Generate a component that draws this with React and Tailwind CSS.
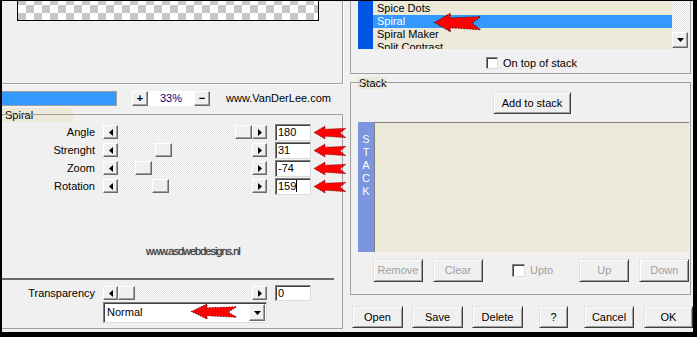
const raised =
  "bg-[#f0f0f0] border border-t-white border-l-white border-r-[#696969] border-b-[#696969] shadow-[inset_-1px_-1px_0_#a0a0a0]";
const push =
  "bg-[#f0f0f0] border border-t-[#e3e3e3] border-l-[#e3e3e3] border-r-[#404040] border-b-[#404040] shadow-[inset_1px_1px_0_#fff,inset_-1px_-1px_0_#a0a0a0] flex items-center justify-center";
const sunken =
  "bg-white border border-t-[#808080] border-l-[#808080] border-r-[#dcdcdc] border-b-[#dcdcdc] shadow-[inset_1px_1px_0_#404040]";
const beige = "bg-[#ece9d8]";
const dots =
  "bg-[image:repeating-conic-gradient(#e4e4e4_0_25%,#fbfbfb_0_50%)] bg-[length:2px_2px]";

function Tri({ dir }) {
  if (dir === "down")
    return (
      <svg width="7" height="4" viewBox="0 0 7 4">
        <polygon points="0,0 7,0 3.5,4" fill="#000" />
      </svg>
    );
  return (
    <svg width="4" height="7" viewBox="0 0 4 7">
      <polygon points={dir === "left" ? "4,0 4,7 0,3.5" : "0,0 0,7 4,3.5"} fill="#000" />
    </svg>
  );
}

function RedArrow({ className }) {
  return (
    <svg className={className} viewBox="0 0 34 16" preserveAspectRatio="none">
      <polygon
        points="1,8 12,1 12,4.5 33,3.5 27,8.5 33,13.5 12,12 12,15"
        fill="#ff0000"
        stroke="#5a1010"
        strokeWidth="0.8"
        strokeDasharray="1 1"
      />
    </svg>
  );
}

function Slider({ thumb }) {
  return (
    <div className="flex shrink-0 h-[14px] w-[164px] ml-[8px]">
      <div className={`${raised} w-[15px] h-full flex items-center justify-center`}>
        <Tri dir="left" />
      </div>
      <div className={`flex-1 h-full ${dots} flex`}>
        <div className={`${raised} w-[17px] h-full`} style={{ marginLeft: thumb }} />
      </div>
      <div className={`${raised} w-[15px] h-full flex items-center justify-center`}>
        <Tri dir="right" />
      </div>
    </div>
  );
}

function Row({ label, thumb, value, caret }) {
  return (
    <div className="flex items-center h-[18px]">
      <div className="w-[93px] shrink-0 text-right">{label}</div>
      <Slider thumb={thumb} />
      <div className={`${sunken} shrink-0 ml-[8px] w-[36px] h-[17px] pl-[2px] flex items-center leading-none`}>
        {value}
        {caret && <span className="w-px h-[12px] bg-black" />}
      </div>
      <RedArrow className="ml-[2px] w-[34px] h-[15px] shrink-0" />
    </div>
  );
}

export default function App() {
  const effects = ["Spice Dots", "Spiral", "Spiral Maker", "Split Contrast"];

  return (
    <div
      className="w-[697px] h-[337px] bg-black pt-px pl-[2px] pr-[4px] pb-[5px] flex text-[11px] text-black"
      style={{ fontFamily: '"Liberation Sans", Arial, sans-serif' }}
    >
      <div className="flex-1 flex bg-[#f0f0f0] overflow-hidden">
        {/* LEFT */}
        <div className="w-[344px] shrink-0 flex flex-col">
          <div className="w-[341px] h-[83px] border-r border-b border-[#a0a0a0] shadow-[1px_1px_0_#fff]">
            <div className="ml-[15px] w-[302px] h-[20px] border-x border-b border-black bg-[image:repeating-conic-gradient(#c6c6c6_0_25%,#ffffff_0_50%)] bg-[length:16px_16px] bg-[position:0_4px]" />
          </div>

          <div className="h-[24px] flex items-start pt-[7px]">
            <div className="w-[115px] h-[15px] border border-l-0 border-[#a0a0a0] bg-[#3399ff]" />
            <div className={`${raised} ml-[15px] w-[16px] h-[15px] flex items-center justify-center font-bold leading-none`}>
              +
            </div>
            <div className="w-[46px] h-[15px] bg-white text-[#000080] flex items-center justify-center">
              33%
            </div>
            <div className={`${raised} w-[16px] h-[15px] flex items-center justify-center font-bold leading-none`}>
              −
            </div>
            <div className="ml-[16px] leading-[15px]">www.VanDerLee.com</div>
          </div>

          <div className={`${beige} w-[71px] h-[14px] leading-[14px]`}>
            <span className={`${beige} pl-[3px] pr-[1px]`}>Spiral</span>
          </div>
          <div className="-mt-[8px] w-[341px] h-[215px] border-t border-r border-b border-[#a0a0a0] pt-[8px] flex flex-col">
            <Row label="Angle" thumb={117} value="180" />
            <Row label="Strenght" thumb={37} value="31" />
            <Row label="Zoom" thumb={17} value="-74" />
            <Row label="Rotation" thumb={34} value="159" caret />

            <div className="mt-[50px] pl-[144px] leading-[13px] text-[#3a3a3a] tracking-[-1px] [text-shadow:0_0_1px_#777]">
              www.asdwebdesigns.nl
            </div>

            <div className="mt-[20px] w-[332px] h-[2px] bg-[#6a6a6a]" />

            <div className="mt-[5px] flex items-center h-[16px]">
              <div className="w-[93px] shrink-0 text-right">Transparency</div>
              <Slider thumb={0} />
              <div className={`${sunken} shrink-0 ml-[8px] w-[36px] h-[16px] pl-[2px] flex items-center leading-none`}>
                0
              </div>
            </div>

            <div className={`${sunken} relative mt-[1px] ml-[101px] w-[164px] h-[21px] flex items-center pl-[3px]`}>
              <span className="flex-1">Normal</span>
              <div className={`${raised} mr-[1px] w-[16px] h-[17px] flex items-center justify-center`}>
                <Tri dir="down" />
              </div>
              <RedArrow className="absolute left-[86px] top-[0px] w-[48px] h-[17px]" />
            </div>
          </div>
        </div>

        {/* RIGHT */}
        <div className="flex-1 flex flex-col">
          <div className="ml-[4px] w-[341px] h-[73px] border-x border-b border-[#a0a0a0] pl-[7px]">
            <div className="flex h-[48px]">
              <div className="w-[15px] h-full bg-[#0055e5]" />
              <div className={`relative w-[299px] h-full ${beige} overflow-hidden pt-[1px]`}>
                {effects.map((e) => (
                  <div
                    key={e}
                    className={`h-[13px] leading-[13px] pl-[4px] ${e === "Spiral" ? "bg-[#3399ff] text-white" : ""}`}
                  >
                    {e}
                  </div>
                ))}
                <RedArrow className="absolute left-[60px] top-[11px] w-[49px] h-[21px]" />
              </div>
              <div className={`w-[16px] h-full ${dots} flex flex-col justify-end pb-[1px]`}>
                <div className={`${raised} h-[16px] flex items-center justify-center`}>
                  <Tri dir="down" />
                </div>
              </div>
            </div>
            <div className="mt-[6px] ml-[128px] flex items-center">
              <div className={`${sunken} w-[12px] h-[12px]`} />
              <span className="ml-[5px]">On top of stack</span>
            </div>
          </div>

          <div className={`${beige} mt-[3px] ml-[11px] w-[30px] h-[12px] leading-[12px] pl-[2px]`}>Stack</div>
          <div className="-mt-[7px] ml-[4px] w-[341px] h-[213px] border border-[#a0a0a0] flex flex-col">
            <div className={`${push} mt-[9px] ml-[142px] w-[78px] h-[22px]`}>Add to stack</div>
            <div className="mt-[8px] ml-[7px] flex h-[130px]">
              <div className="w-[16px] h-full bg-[#7b95de] text-white flex flex-col items-center pt-[11px] leading-[13px]">
                {"STACK".split("").map((c) => (
                  <span key={c}>{c}</span>
                ))}
              </div>
              <div className={`w-[315px] h-full ${beige} border-t border-l border-[#808080]`} />
            </div>
            <div className="mt-[7px] ml-[22px] flex items-center text-[#a0a0a0]">
              <div className={`${push} w-[50px] h-[23px]`}>Remove</div>
              <div className={`${push} ml-[10px] w-[50px] h-[23px]`}>Clear</div>
              <div className={`${sunken} ml-[29px] w-[13px] h-[13px]`} />
              <span className="ml-[5px]">Upto</span>
              <div className={`${push} ml-[26px] w-[50px] h-[23px]`}>Up</div>
              <div className={`${push} ml-[10px] w-[50px] h-[23px]`}>Down</div>
            </div>
          </div>

          <div className="mt-[11px] ml-[6px] flex">
            <div className={`${push} w-[51px] h-[22px]`}>Open</div>
            <div className={`${push} ml-[9px] w-[51px] h-[22px]`}>Save</div>
            <div className={`${push} ml-[9px] w-[51px] h-[22px]`}>Delete</div>
            <div className={`${push} ml-[16px] w-[29px] h-[22px]`}>?</div>
            <div className={`${push} ml-[16px] w-[50px] h-[22px]`}>Cancel</div>
            <div className={`${push} ml-[10px] w-[49px] h-[22px]`}>OK</div>
          </div>
        </div>
      </div>
    </div>
  );
}
